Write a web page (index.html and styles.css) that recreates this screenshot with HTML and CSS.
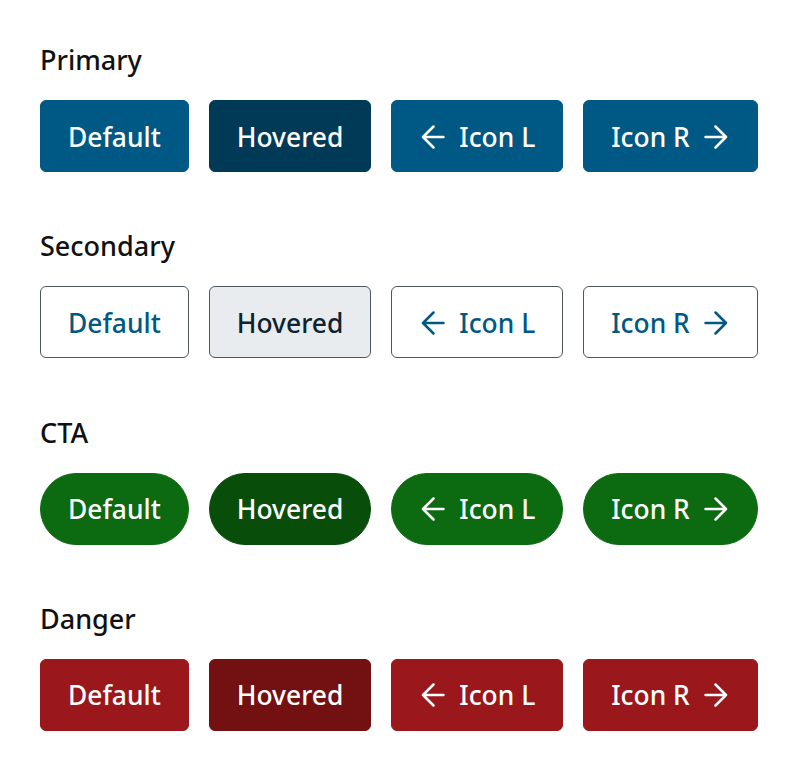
FILE: index.html
```html
<!DOCTYPE html>
<html>
<head>
<meta charset="utf-8">
<link rel="stylesheet" href="styles.css">
</head>
<body>
<main class="page">
  <section class="group">
    <h2 class="title">Primary</h2>
    <div class="row">
      <button class="btn primary">Default</button>
      <button class="btn primary hover">Hovered</button>
      <button class="btn primary icon-l"><svg class="ico" viewBox="0 0 24 24"><path d="M22.5 12H2M12.5 1.5 2 12l10.5 10.5"/></svg>Icon L</button>
      <button class="btn primary icon-r">Icon R<svg class="ico" viewBox="0 0 24 24"><path d="M1.5 12H22M11.5 1.5 22 12 11.5 22.5"/></svg></button>
    </div>
  </section>
  <section class="group">
    <h2 class="title">Secondary</h2>
    <div class="row">
      <button class="btn secondary">Default</button>
      <button class="btn secondary hover">Hovered</button>
      <button class="btn secondary icon-l"><svg class="ico" viewBox="0 0 24 24"><path d="M22.5 12H2M12.5 1.5 2 12l10.5 10.5"/></svg>Icon L</button>
      <button class="btn secondary icon-r">Icon R<svg class="ico" viewBox="0 0 24 24"><path d="M1.5 12H22M11.5 1.5 22 12 11.5 22.5"/></svg></button>
    </div>
  </section>
  <section class="group">
    <h2 class="title">CTA</h2>
    <div class="row">
      <button class="btn cta">Default</button>
      <button class="btn cta hover">Hovered</button>
      <button class="btn cta icon-l"><svg class="ico" viewBox="0 0 24 24"><path d="M22.5 12H2M12.5 1.5 2 12l10.5 10.5"/></svg>Icon L</button>
      <button class="btn cta icon-r">Icon R<svg class="ico" viewBox="0 0 24 24"><path d="M1.5 12H22M11.5 1.5 22 12 11.5 22.5"/></svg></button>
    </div>
  </section>
  <section class="group">
    <h2 class="title">Danger</h2>
    <div class="row">
      <button class="btn danger">Default</button>
      <button class="btn danger hover">Hovered</button>
      <button class="btn danger icon-l"><svg class="ico" viewBox="0 0 24 24"><path d="M22.5 12H2M12.5 1.5 2 12l10.5 10.5"/></svg>Icon L</button>
      <button class="btn danger icon-r">Icon R<svg class="ico" viewBox="0 0 24 24"><path d="M1.5 12H22M11.5 1.5 22 12 11.5 22.5"/></svg></button>
    </div>
  </section>
</main>
</body>
</html>
```
FILE: styles.css
```css
html, body {
  margin: 0;
  padding: 0;
  background: #ffffff;
}
body {
  font-family: "Noto Sans", "Open Sans", sans-serif;
  color: #111111;
}
.page {
  padding: 42px 40px 0 40px;
  display: flex;
  flex-direction: column;
  gap: 56.33px;
}
.group {
  display: flex;
  flex-direction: column;
  gap: 22px;
}
.title {
  margin: 0;
  font-size: 27px;
  line-height: 36px;
  font-weight: 500;
  color: #111111;
}
.row {
  display: flex;
  gap: 20px;
}
.btn {
  box-sizing: border-box;
  flex: none;
  height: 72px;
  padding: 1px 27px 0 27px;
  display: inline-flex;
  align-items: center;
  gap: 14px;
  white-space: nowrap;
  font-family: "Noto Sans", "Open Sans", sans-serif;
  font-size: 26.4px;
  font-weight: 500;
  border: 1px solid transparent;
  border-radius: 6px;
  cursor: pointer;
}
.icon-l { padding-left: 29px; }
.icon-r { padding-right: 29px; }
.ico {
  width: 24px;
  height: 24px;
  fill: none;
  stroke: currentColor;
  stroke-width: 2.5;
  stroke-linecap: round;
  stroke-linejoin: round;
}
.primary { background: #005884; color: #ffffff; border-color: #005884; }
.primary.hover { background: #003a57; border-color: #003a57; }
.secondary { background: #ffffff; color: #005884; border-color: #4b5660; }
.secondary.hover { background: #e8ecef; color: #0e2332; }
.cta { background: #0c6a10; color: #ffffff; border-color: #0c6a10; border-radius: 36px; }
.cta.hover { background: #094d0b; border-color: #094d0b; }
.danger { background: #9a181b; color: #ffffff; border-color: #9a181b; }
.danger.hover { background: #731011; border-color: #731011; }
```
